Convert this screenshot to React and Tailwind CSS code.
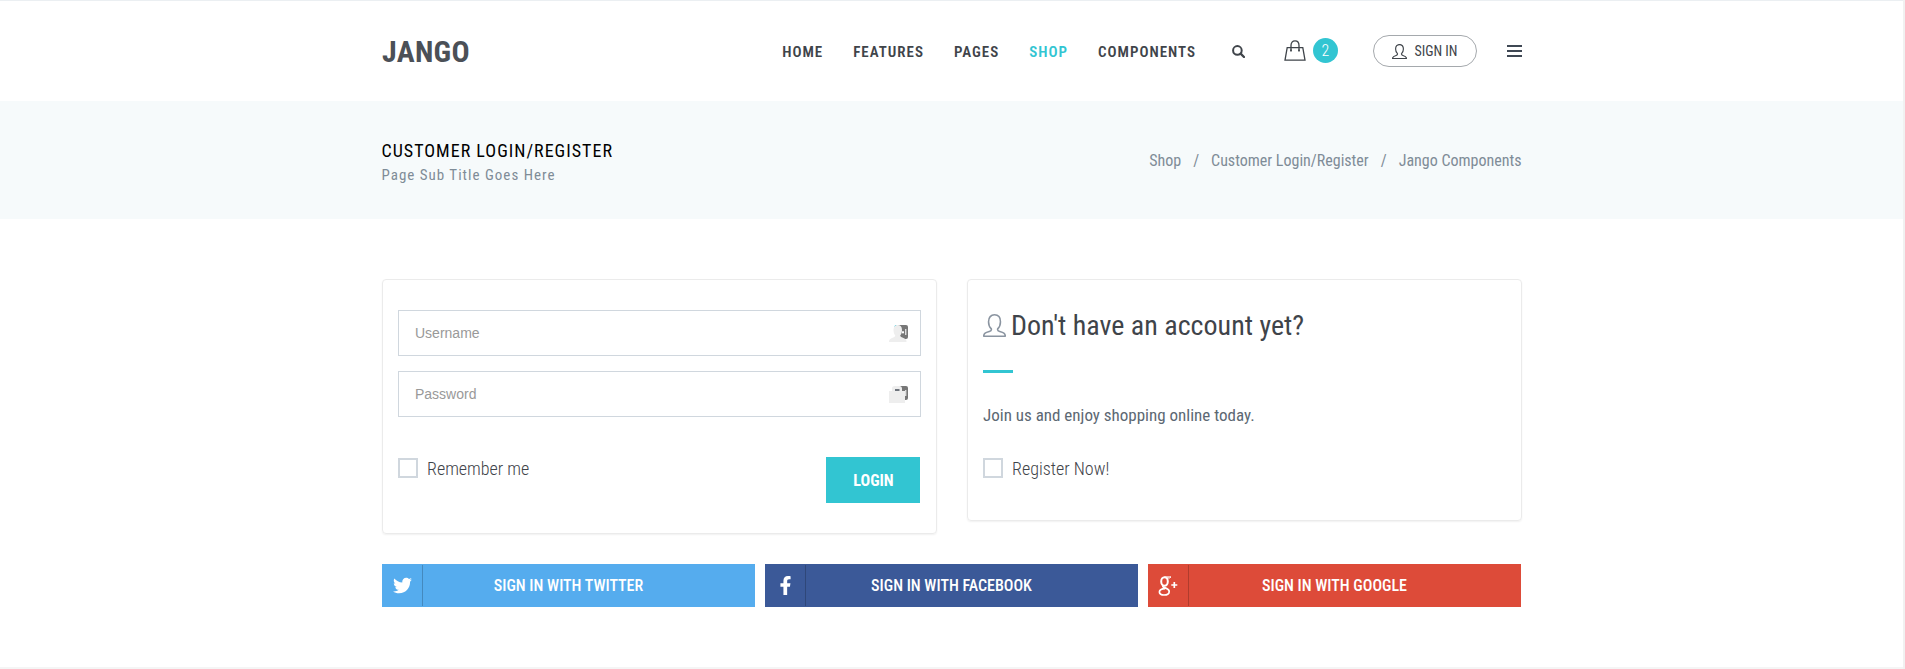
import React from "react";
import { FaTwitter, FaFacebookF } from "react-icons/fa";

const nav = ["HOME", "FEATURES", "PAGES", "SHOP", "COMPONENTS"];
const crumbs = ["Shop", "/", "Customer Login/Register", "/", "Jango Components"];

function UserIcon({ className, stroke }) {
  return (
    <svg viewBox="0 0 22 22" className={className} fill="none" stroke="currentColor" strokeWidth={stroke} strokeLinejoin="round">
      <path d="M8 14.2C6.300 12.700 5.300 10.400 5.300 7.400C5.300 3.200 7.600 .8 11 .8S16.700 3.200 16.700 7.400C16.700 10.400 15.700 12.700 14 14.200C13.700 15.700 14.400 16.300 16 16.800C19.500 17.800 21.300 18.300 21.300 21.200H.7C.7 18.300 2.500 17.800 6 16.800C7.600 16.300 8.300 15.700 8 14.200Z" />
    </svg>
  );
}

function SearchIcon() {
  return (
    <svg width="13" height="13" viewBox="0 0 13 13" fill="none" stroke="#3f444a" className="ml-[35.5px]">
      <circle cx="5.400" cy="5.400" r="4.300" strokeWidth="2" />
      <path d="M8.600 8.600L12 12" strokeWidth="2.300" strokeLinecap="round" />
    </svg>
  );
}

function BagIcon() {
  return (
    <svg width="22" height="21" viewBox="0 0 22 21" fill="none" stroke="#3f444a" strokeWidth="1.300">
      <path d="M3.200 7.600H18.800L21 20.200H1Z" />
      <path d="M7 11V5.500C7 2.500 8.500 .9 11 .9S15 2.500 15 5.500V11" />
      <path d="M6.200 10.500h1.600M14.200 10.500h1.600" strokeWidth="2" />
    </svg>
  );
}

function GooglePlusIcon() {
  return (
    <svg width="20" height="20" viewBox="0 0 20 20" fill="none" stroke="#fff">
      <ellipse cx="6.500" cy="5.500" rx="3.300" ry="4.300" strokeWidth="2" />
      <path d="M6.500 .9H13L11.500 2H9" strokeWidth="1" />
      <path d="M5 9.600C3.600 12.200 11.200 11.400 11.200 15.400C11.200 17.700 9 19 6 19C3.300 19 1.400 17.900 1.400 16C1.400 13.700 3.700 12.800 7.200 12.700" strokeWidth="1.700" />
      <path d="M16.300 6v6M13.300 9h6" strokeWidth="1.700" />
    </svg>
  );
}

function FieldBadge() {
  return (
    <>
      <path d="M9 1h8a2 2 0 0 1 2 2v10a2 2 0 0 1-2 2H9z" fill="#777" />
      <path d="M16.700 5v6" stroke="#ddd" strokeWidth="1.400" />
    </>
  );
}

function UserField() {
  return (
    <svg width="20" height="18" viewBox="0 0 20 18" className="mb-px">
      <FieldBadge />
      <rect x="13" y="7.300" width="2" height="2" fill="#fff" />
      <path d="M5.200 3l1-2h1.500v2z" fill="#46c8dc" />
      <path d="M4.500 6C4.500 2.500 6 1 8.700 1S13 2.500 13 6C13 8.500 12.300 10.500 11.200 11.600C11.200 13 12.500 13.200 15 14.300C17 15.200 17.500 16 17.500 18H0C0 16 .5 15.200 2.500 14.300C5 13.200 6.300 13 6.300 11.600C5.200 10.500 4.500 8.500 4.500 6Z" fill="#eee" />
    </svg>
  );
}

function LockField() {
  return (
    <svg width="20" height="18" viewBox="0 0 20 18" className="mb-px">
      <FieldBadge />
      <path d="M0 6h3V3.500C3 2 4 1 5.500 1H10.500C12 1 13 2 13 3.500V6H16V18H0Z" fill="#eee" />
      <path d="M6 4h4.500v2H6z" fill="#6e747c" />
    </svg>
  );
}

function Field({ label, type, children }) {
  return (
    <div className="flex h-[46px] items-center border border-[#d0d7de] bg-white pr-[11px] pl-4">
      <input
        type={type}
        placeholder={label}
        className="min-w-0 flex-1 font-['Liberation_Sans',sans-serif] text-[14px] text-[#5c6873] outline-none placeholder:text-[#999]"
      />
      {children}
    </div>
  );
}

function Check({ children }) {
  return (
    <label className="flex h-[22px] items-center gap-[9px] text-[18px] leading-[22px] font-light text-[#3f444a]">
      <span className="size-5 shrink-0 border-2 border-[#d0d7de]" />
      <span className="pt-[2px]">{children}</span>
    </label>
  );
}

function Social({ className, icon, children }) {
  return (
    <button className={"flex h-[43px] flex-1 items-center text-[16px] font-medium text-white " + className}>
      <span className="flex h-[41px] w-[41px] shrink-0 items-center justify-center border-r border-black/20">{icon}</span>
      <span className="flex-1 pt-px pr-[41px] text-center">{children}</span>
    </button>
  );
}

export default function App() {
  return (
    <div className="flex h-[669px] flex-col border-r-2 border-[#f1f1f1] bg-white font-['Roboto_Condensed',Roboto,sans-serif] [font-stretch:75%]">
      <header className="h-[101px] border-t border-[#ebeff2]">
        <div className="mx-auto flex h-full w-[1141px] items-center pl-px">
          <div className="pt-[2px] text-[30px] leading-none font-bold tracking-[0.3px] text-[#4b5057]">JANGO</div>
          <nav className="ml-auto flex gap-[30px] pt-[2px] text-[15px] font-semibold tracking-[1px]">
            {nav.map((n) => (
              <a key={n} className={n === "SHOP" ? "text-[#32c5d2]" : "text-[#3f444a]"}>{n}</a>
            ))}
          </nav>
          <SearchIcon />
          <div className="ml-[39.5px] flex items-center gap-[7px] pb-px">
            <BagIcon />
            <span className="flex size-[25px] items-center justify-center rounded-full bg-[#32c5d2] text-[16px] font-light text-white">2</span>
          </div>
          <button className="ml-[35px] flex h-8 w-[104px] items-center justify-center gap-[7px] rounded-full border border-[#a5a9ad] text-[14px] text-[#3f444a]">
            <UserIcon className="size-[15px]" stroke={1.7} />
            <span className="pt-px">SIGN IN</span>
          </button>
          <div className="ml-[30px] flex w-[15px] flex-col gap-[3px]">
            <span className="h-[2px] bg-[#3f4854]" />
            <span className="h-[2px] bg-[#3f4854]" />
            <span className="h-[2px] bg-[#3f4854]" />
          </div>
        </div>
      </header>
      <section className="h-[118px] bg-[#f6fafb]">
        <div className="mx-auto flex h-full w-[1140px] items-center justify-between">
          <div className="pt-[5px]">
            <h1 className="pb-[2px] text-[18px] leading-[23px] tracking-[1px] text-black">CUSTOMER LOGIN/REGISTER</h1>
            <p className="text-[15px] leading-[23px] tracking-[1px] text-[#7f8c97]">Page Sub Title Goes Here</p>
          </div>
          <div className="flex gap-3 pt-[2px] text-[16px] text-[#7f8c97]">
            {crumbs.map((c, i) => (
              <span key={i}>{c}</span>
            ))}
          </div>
        </div>
      </section>
      <main className="mx-auto w-[1141px] pt-[60px] pl-px">
        <div className="flex items-start gap-[30px]">
          <div className="h-[255px] flex-1 rounded border border-[#ebebeb] px-[15px] pt-[30px] shadow-[0_1px_2px_rgba(0,0,0,0.06)]">
            <div className="flex flex-col gap-[15px]">
              <Field label="Username" type="text"><UserField /></Field>
              <Field label="Password" type="password"><LockField /></Field>
            </div>
            <div className="mt-10 flex items-start justify-between">
              <Check>Remember me</Check>
              <button className="mr-px h-[46px] w-[94px] bg-[#32c5d2] pt-[2px] pl-px text-[16px] font-bold text-white">LOGIN</button>
            </div>
          </div>
          <div className="h-[242px] flex-1 rounded border border-[#ebebeb] px-[15px] pt-[29px] shadow-[0_1px_2px_rgba(0,0,0,0.06)]">
            <h2 className="flex h-[34px] items-center gap-[5px] text-[28px] text-[#3f444a]">
              <UserIcon className="mb-px size-[23px] text-[#8a94a0]" stroke={1.5} />
              <span>Don't have an account yet?</span>
            </h2>
            <div className="mt-[27px] h-[3px] w-[30px] bg-[#32c5d2]" />
            <p className="mt-[30px] mb-[30px] text-[17px] leading-[24px] text-[#5c6873]">Join us and enjoy shopping online today.</p>
            <Check>Register Now!</Check>
          </div>
        </div>
        <div className="mt-[30px] mr-px flex gap-[10px]">
          <Social className="bg-[#55acee]" icon={<FaTwitter size={19} />}>SIGN IN WITH TWITTER</Social>
          <Social className="bg-[#3b5998]" icon={<FaFacebookF size={19} />}>SIGN IN WITH FACEBOOK</Social>
          <Social className="bg-[#dd4b39]" icon={<GooglePlusIcon />}>SIGN IN WITH GOOGLE</Social>
        </div>
      </main>
      <div className="mt-auto h-[2px] bg-[#f5f5f5]" />
    </div>
  );
}
